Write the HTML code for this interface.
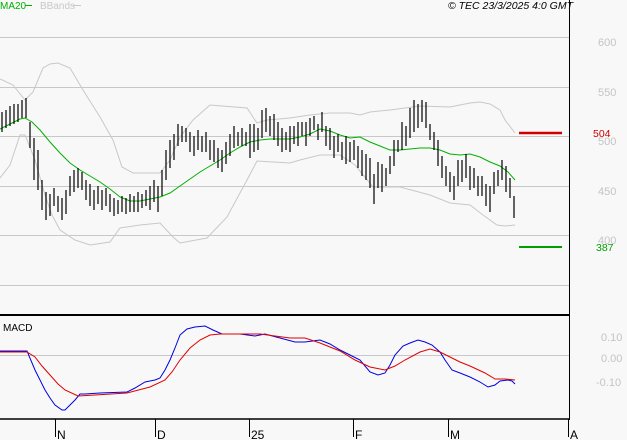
<!DOCTYPE html><html><head><style>
html,body{margin:0;padding:0;background:#f8f8f8;}
svg{display:block;font-family:"Liberation Sans",sans-serif;}
</style></head><body>
<svg width="627" height="440" viewBox="0 0 627 440">
<rect width="627" height="440" fill="#f8f8f8"/>
<g stroke="#c8c8c8" stroke-width="1">
<line x1="0" y1="37.5" x2="569" y2="37.5"/><line x1="0" y1="87.5" x2="569" y2="87.5"/>
<line x1="0" y1="136.5" x2="569" y2="136.5"/><line x1="0" y1="186.5" x2="569" y2="186.5"/>
<line x1="0" y1="235.5" x2="569" y2="235.5"/><line x1="0" y1="285.5" x2="569" y2="285.5"/>
<line x1="0" y1="355.5" x2="569" y2="355.5"/>
</g>
<g font-size="11" fill="#c4c4c4">
<text x="598" y="46">600</text><text x="598" y="96">550</text><text x="598" y="145">500</text>
<text x="598" y="195">450</text><text x="598" y="244">400</text>
<text x="601" y="341">0.10</text><text x="601" y="362">0.00</text><text x="596" y="386">-0.10</text>
</g>
<text x="0" y="9" font-size="10" fill="#00b000">MA20</text><line x1="25" y1="5.5" x2="32" y2="5.5" stroke="#00b000"/>
<text x="40" y="9" font-size="10" fill="#c8c8c8">BBands</text><line x1="73" y1="5.5" x2="81" y2="5.5" stroke="#c8c8c8"/>
<text x="573" y="9" font-size="10.5" font-style="italic" text-anchor="end" fill="#000">© TEC 23/3/2025 4:0 GMT</text>
<polyline fill="none" stroke="#c8c8c8" points="0,79 13,85 25,100 33,92 43,68 50,64 58,63 70,68 83,90 100,117 113,140 122,167 133,173 160,173 170,160 180,137 193,120 210,105 247,108 257,123 267,120 290,118 310,115 330,113 350,113 360,115 370,112 390,110 420,106 450,107 470,103 480,102 490,104 500,110 505,120 515,133"/>
<polyline fill="none" stroke="#c8c8c8" points="0,178 10,165 20,135 25,135 35,160 45,195 52,215 60,230 75,240 90,245 110,242 120,228 140,225 160,223 173,237 180,243 207,238 227,217 247,180 257,161 290,163 300,160 320,155 340,155 355,165 373,187 400,187 430,195 450,203 470,205 483,215 497,225 505,226 515,225"/>
<polyline fill="none" stroke="#00b000" points="0,129 10,124 20,119 25,118 32,122 40,130 50,142 60,153 70,163 80,170 90,176 100,182 110,189 120,197 130,201 140,201 150,199 160,197 170,193 180,186 190,179 200,172 210,166 220,160 230,153 240,147 250,142 260,140 270,139 280,139 290,139 300,137 310,134 320,129 330,131 340,135 350,138 360,137 370,142 380,146 390,150 400,150 410,149 420,148 430,148 440,150 450,154 460,155 470,154 480,157 490,162 500,166 508,172 515,180"/>
<path stroke="#000" stroke-width="1.2" fill="none" d="M2,112V132M6,110V128M10,106V126M14,104V124M18,104V122M22,100V118M26,98V118M30,122V148M34,138V180M38,150V190M42,180V210M46,192V220M50,194V216M54,188V206M58,196V212M62,198V220M66,190V214M70,176V196M74,170V192M78,168V188M82,172V190M86,180V200M90,184V206M94,190V210M98,186V204M102,190V210M106,188V206M110,194V212M114,198V216M118,200V214M122,196V212M126,198V214M130,194V212M134,196V212M138,192V212M142,194V208M146,190V206M150,186V210M154,180V202M158,186V212M162,170V196M166,150V180M170,140V168M174,134V160M178,124V146M182,126V142M186,128V142M190,132V152M194,136V156M198,130V150M202,136V152M206,132V152M210,140V160M214,140V162M218,148V168M222,150V172M226,142V164M230,134V156M234,126V148M238,132V146M242,128V146M246,132V146M250,124V158M254,124V152M258,128V150M262,110V138M266,108V132M270,116V136M274,114V140M278,122V146M282,128V152M286,132V150M290,126V152M294,126V144M298,122V146M302,122V136M306,122V146M310,118V136M314,116V130M318,124V140M322,112V132M326,126V146M330,128V150M334,136V158M338,134V152M342,142V160M346,136V164M350,142V162M354,140V160M358,146V168M362,150V176M366,154V180M370,158V188M374,174V204M378,162V188M382,164V192M386,168V186M390,156V174M394,140V166M398,140V152M402,122V150M406,126V146M410,108V138M414,100V132M418,104V128M422,100V122M426,102V128M430,124V140M434,132V150M438,140V166M442,156V178M446,166V186M450,172V192M454,176V200M458,160V186M462,160V182M466,154V178M470,166V190M474,168V188M478,176V196M482,176V196M486,184V206M490,186V212M494,172V194M498,170V186M502,160V180M506,166V192M510,178V198M514,196V218"/>
<line x1="519" y1="133" x2="562" y2="133" stroke="#d00000" stroke-width="2.5"/>
<text x="593" y="137" font-size="10.5" fill="#d00000">504</text>
<line x1="519" y1="247" x2="562" y2="247" stroke="#00a000" stroke-width="2"/>
<text x="596" y="251" font-size="10.5" fill="#00a000">387</text>
<line x1="0" y1="315" x2="569" y2="315" stroke="#000" stroke-width="2"/>
<line x1="569.5" y1="0" x2="569.5" y2="420" stroke="#000"/>
<text x="3" y="331" font-size="10" fill="#000">MACD</text>
<polyline fill="none" stroke="#0000e0" points="0,351 27,351 35,370 40,380 45,390 50,398 55,405 62,410 65,410 75,400 80,394 85,394 100,393 127,392 135,388 145,382 155,380 160,378 165,370 170,360 175,348 180,335 187,329 195,327 205,326 213,330 222,334 240,334 255,336 265,334 280,338 295,342 305,342 320,340 330,344 340,350 350,355 360,360 370,372 378,375 385,373 390,365 395,355 403,346 410,343 418,340 425,342 432,345 440,352 445,360 452,370 460,373 470,377 480,382 488,387 495,385 500,381 508,380 512,381 515,384"/>
<polyline fill="none" stroke="#e00000" points="0,352 27,352 35,357 42,366 50,375 58,384 65,390 78,396 95,395 127,393 150,387 165,380 172,372 180,360 190,348 200,340 210,335 220,334 240,334 260,334 275,336 290,338 305,338 320,343 340,351 355,360 370,367 385,370 395,366 405,360 420,352 430,349 440,352 450,357 460,362 470,366 485,373 495,379 505,379 515,380"/>
<line x1="0" y1="419" x2="569" y2="419" stroke="#000" stroke-width="1.5"/>
<g stroke="#000"><line x1="55.5" y1="419" x2="55.5" y2="437"/><line x1="155.5" y1="419" x2="155.5" y2="437"/><line x1="249.5" y1="419" x2="249.5" y2="437"/><line x1="353.5" y1="419" x2="353.5" y2="437"/><line x1="448.5" y1="419" x2="448.5" y2="437"/><line x1="568.5" y1="419" x2="568.5" y2="437"/></g>
<g font-size="12" fill="#000"><text x="57" y="439">N</text><text x="157" y="439">D</text><text x="251" y="439">25</text><text x="355" y="439">F</text><text x="450" y="439">M</text><text x="570" y="439">A</text></g>
</svg>
</body></html>
